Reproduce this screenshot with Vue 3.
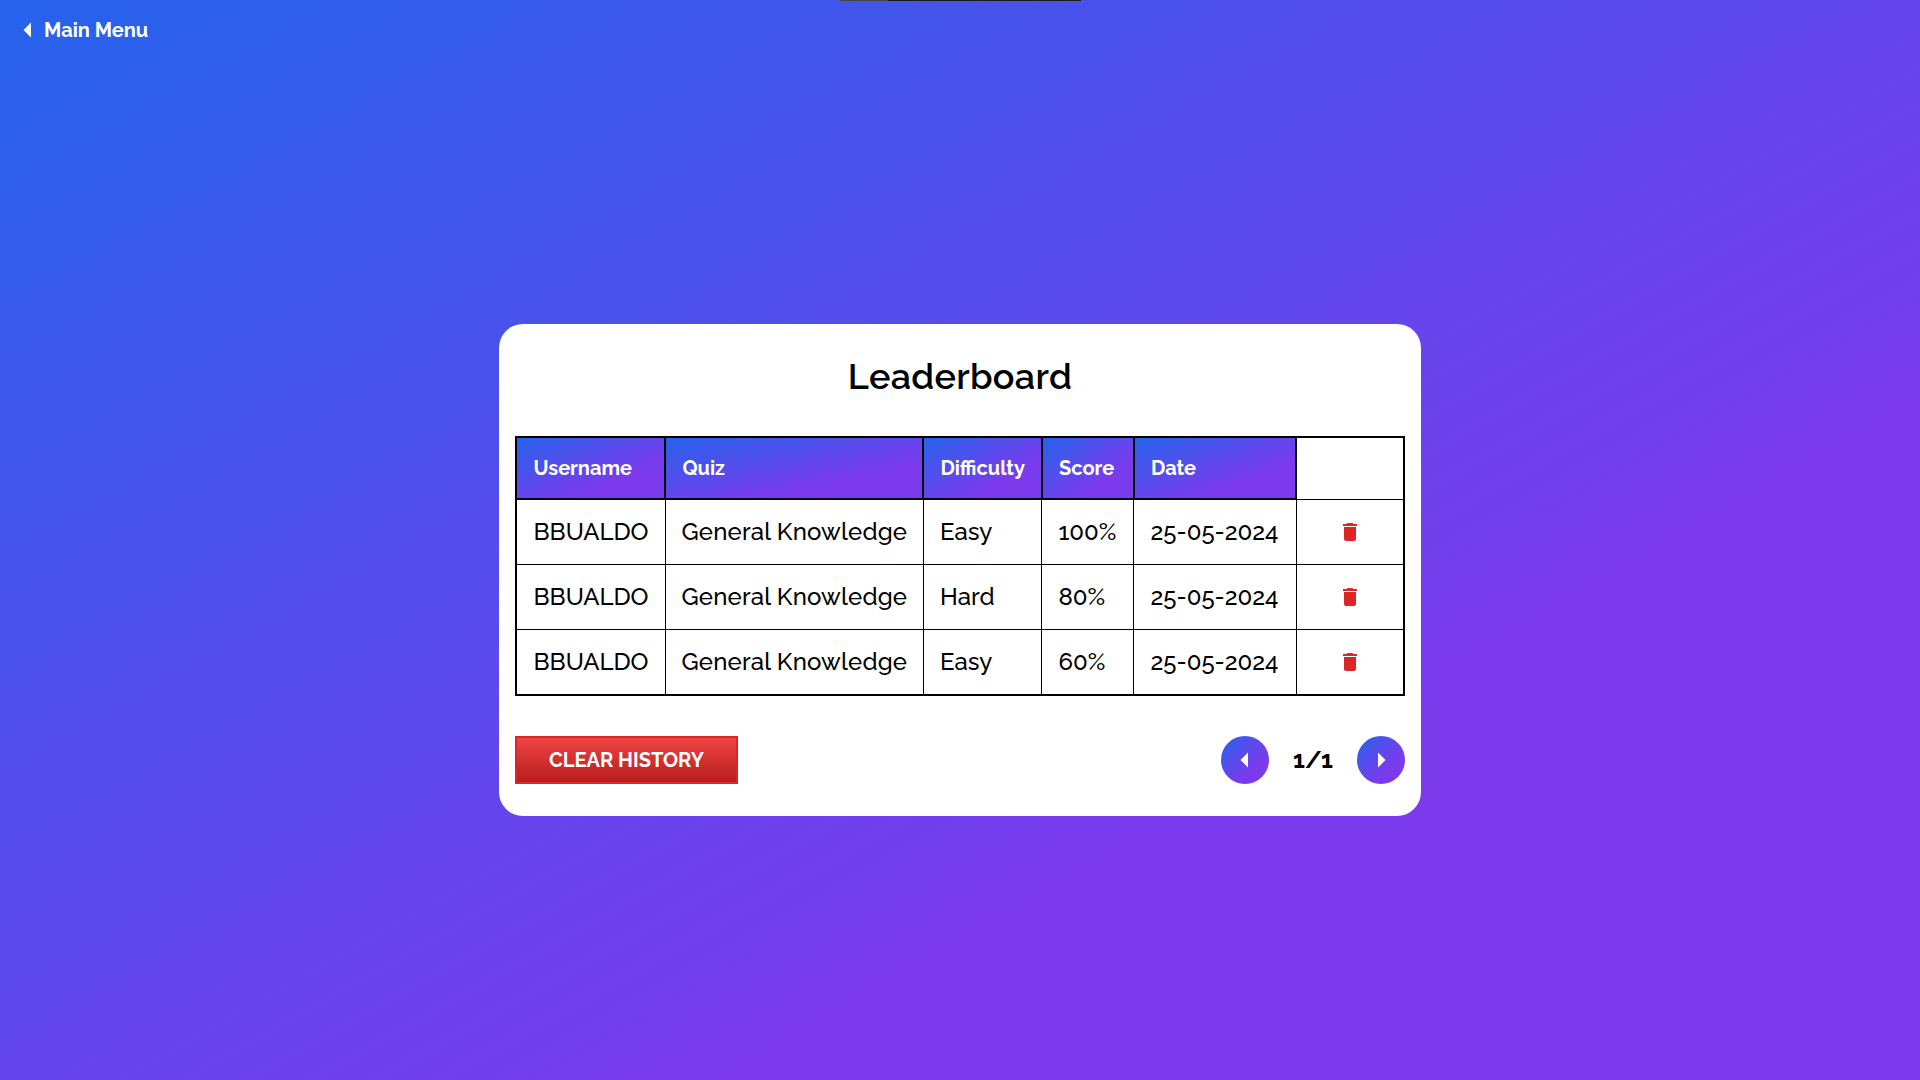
<script setup>
const columns = ['Username', 'Quiz', 'Difficulty', 'Score', 'Date']
const widths = [149, 258, 118.5, 92, 162.5, 108]

const results = [
  ['BBUALDO', 'General Knowledge', 'Easy', '100%', '25-05-2024'],
  ['BBUALDO', 'General Knowledge', 'Hard', '80%', '25-05-2024'],
  ['BBUALDO', 'General Knowledge', 'Easy', '60%', '25-05-2024'],
]
</script>

<template>
  <div class="page">
    <div class="notch"><span></span></div>
    <header class="topbar">
      <a class="menu-link">
        <svg class="arrow" width="9" height="16" viewBox="8.6667 6.6667 6 10.6667" fill="currentColor"><path d="M14 7l-5 5 5 5V7z" /></svg>
        <span>Main Menu</span>
      </a>
    </header>

    <main class="main">
      <section class="card">
        <h1 class="title">Leaderboard</h1>

        <table class="table">
          <colgroup>
            <col v-for="(w, i) in widths" :key="i" :style="{ width: w + 'px' }" />
          </colgroup>
          <thead>
            <tr>
              <th v-for="c in columns" :key="c">{{ c }}</th>
              <td class="actions"></td>
            </tr>
          </thead>
          <tbody>
            <tr v-for="(row, r) in results" :key="r">
              <td v-for="(cell, i) in row" :key="i" :class="{ quiz: i === 1 }">{{ cell }}</td>
              <td class="actions">
                <button class="delete" aria-label="Delete">
                  <svg width="24" height="24" viewBox="0 0 24 24" fill="currentColor">
                    <path d="M6 19c0 1.1.9 2 2 2h8c1.1 0 2-.9 2-2V7H6v12zM19 4h-3.5l-1-1h-5l-1 1H5v2h14V4z" />
                  </svg>
                </button>
              </td>
            </tr>
          </tbody>
        </table>

        <footer class="footer">
          <button class="clear">CLEAR HISTORY</button>
          <nav class="pager">
            <button class="round" aria-label="Previous">
              <svg class="arrow" width="36" height="36" viewBox="0 0 24 24" fill="currentColor"><path d="M14 7l-5 5 5 5V7z" /></svg>
            </button>
            <span class="count">1/1</span>
            <button class="round" aria-label="Next">
              <svg class="arrow" width="36" height="36" viewBox="0 0 24 24" fill="currentColor"><path d="M10 17l5-5-5-5v10z" /></svg>
            </button>
          </nav>
        </footer>
      </section>
    </main>
  </div>
</template>

<style>
body {
  margin: 0;
}
</style>

<style scoped>
.page {
  position: relative;
  display: flex;
  flex-direction: column;
  height: 100vh;
  overflow: hidden;
  font-family: Raleway, Lato, "Open Sans", sans-serif;
  color: #000;
  background: linear-gradient(to bottom right, #2563eb, #7c3aed 70%);
}
.notch {
  position: absolute;
  top: 0;
  left: 840px;
  display: flex;
  width: 241px;
  height: 1px;
  background: #1c1c1f;
}
.notch span {
  width: 48px;
  background: #46464a;
}
.arrow {
  display: block;
}
.topbar {
  display: flex;
  align-items: center;
  height: 60px;
  padding-left: 23px;
}
.menu-link {
  display: flex;
  align-items: center;
  gap: 12px;
  color: #fff;
  font-size: 20px;
  line-height: 24px;
  font-weight: 700;
}
.main {
  flex: 1;
  display: flex;
  align-items: center;
  justify-content: center;
}
.card {
  box-sizing: border-box;
  display: flex;
  flex-direction: column;
  gap: 40px;
  width: 922px;
  height: 492px;
  padding: 32px 16px;
  border-radius: 24px;
  background: #fff;
}
.title {
  margin: 0;
  font-size: 36px;
  line-height: 40px;
  font-weight: 600;
  letter-spacing: 0.3px;
  text-align: center;
}
.table {
  width: 890px;
  table-layout: fixed;
  border-collapse: collapse;
  border: 2px solid #000;
}
th,
td {
  padding: 16px;
  text-align: left;
  white-space: nowrap;
}
th {
  border: 2px solid #000;
  background: linear-gradient(to bottom right, #2563eb, #7c3aed 70%);
  color: #fff;
  font-size: 20px;
  line-height: 28px;
  font-weight: 700;
}
td {
  border: 1px solid #000;
  font-size: 24px;
  line-height: 32px;
  font-weight: 500;
}
th:not(.actions),
td:not(.actions, .quiz) {
  padding-left: 16.5px;
}
.quiz {
  letter-spacing: 0.18px;
}
.actions {
  padding-block: 0;
}
button {
  padding: 0;
  border: 0;
  font: inherit;
}
.delete {
  display: flex;
  justify-content: center;
  width: 100%;
  background: none;
  color: #dc2626;
}
.footer {
  display: flex;
  align-items: center;
  justify-content: space-between;
  margin-top: auto;
}
.clear {
  box-sizing: border-box;
  width: 223px;
  height: 48px;
  border: 2px solid #dc2626;
  background: linear-gradient(to bottom, #ef4444, #b91c1c);
  color: #fff;
  font-size: 20px;
  font-weight: 700;
}
.pager {
  display: flex;
  align-items: center;
}
.round {
  display: flex;
  align-items: center;
  justify-content: center;
  width: 48px;
  height: 48px;
  border-radius: 50%;
  background: linear-gradient(to bottom right, #2563eb, #7c3aed 70%);
  color: #fff;
}
.count {
  width: 88px;
  margin-bottom: 2px;
  text-align: center;
  font-size: 24px;
  font-weight: 700;
}
</style>
